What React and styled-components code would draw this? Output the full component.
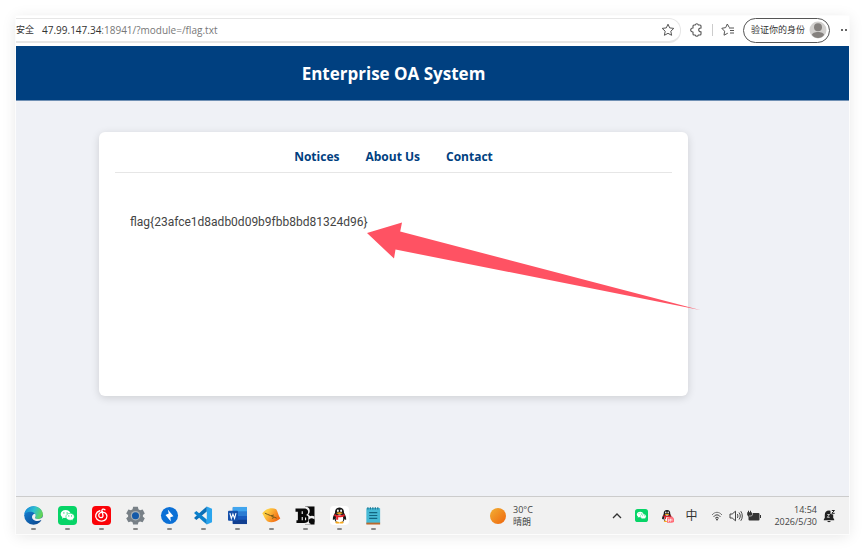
import React from "react";
import styled, { createGlobalStyle, ThemeProvider } from "styled-components";

const theme = {
    main: "#004080",
    page: "#eff1f6",
    taskbar: "#f1f1f1",
    text: "#444444",
    arrow: "#ff5263",
    font: '"Open Sans", "Noto Sans CJK SC", sans-serif',
};

const GlobalStyle = createGlobalStyle`
    * {
        box-sizing: border-box;
    }
    body {
        margin: 0;
        background: #ffffff;
        color: ${theme.text};
        font-family: ${theme.font};
    }
    button,
    input {
        border: 0;
        padding: 0;
        background: none;
        color: inherit;
        font: inherit;
    }
    svg {
        display: block;
        flex: none;
    }
`;

const Desktop = styled.div`
    display: flex;
    min-height: 100vh;
    padding: 16px;
`;

const Screen = styled.div`
    flex: 1;
    min-width: 0;
    display: flex;
    flex-direction: column;
    box-shadow: 0 0 0 1px #fcfcfc, 0 2px 14px rgba(0, 0, 0, 0.1);
`;

/* browser toolbar */

const Toolbar = styled.div`
    display: flex;
    align-items: center;
    height: 30px;
    padding-bottom: 2px;
`;

const AddressBar = styled.div`
    flex: 1;
    min-width: 0;
    display: flex;
    align-items: center;
    height: 25px;
    padding-right: 5px;
    border: 1px solid #e6e6e6;
    border-width: 1px 1px 2px 0;
    border-radius: 0 12px 12px 0;
    font-size: 10px;
    line-height: 16px;
`;

const Security = styled.span`
    margin-right: 8px;
    font-size: 9px;
    color: #333333;
`;

const Host = styled.label`
    color: #333333;
`;

const Address = styled.input`
    flex: 1;
    min-width: 0;
    color: #777777;
    outline: none;
`;

const ToolButton = styled.button`
    display: flex;
    align-items: center;
    justify-content: center;
    width: ${(props) => props.$width || 16}px;
    height: 16px;
    color: #555555;
`;

const Tools = styled.div`
    display: flex;
    align-items: center;
    gap: 7px;
    padding-left: 8px;
`;

const Divider = styled.span`
    width: 1px;
    height: 12px;
    background: #cccccc;
`;

const Profile = styled.button`
    display: flex;
    align-items: center;
    gap: 4px;
    height: 25px;
    padding: 0 2px 0 7px;
    border: 1px solid #555555;
    border-radius: 13px;
    font-size: 9px;
    line-height: 16px;
    color: #333333;
    white-space: nowrap;
`;

/* web page */

const Page = styled.div`
    flex: 1;
    background: ${(props) => props.theme.page};
`;

const Header = styled.header`
    padding: 15px 78px 13px 0;
    background: ${(props) => props.theme.main};
    border-bottom: 1px solid #7090b4;
    color: #ffffff;
    text-align: center;
`;

const Title = styled.h1`
    margin: 0;
    font-size: 17px;
    line-height: 26px;
    font-weight: 700;
`;

const Card = styled.main`
    min-height: 264px;
    margin: 31px 161px 0 83px;
    padding: 17px 16px;
    border-radius: 6px;
    background: #ffffff;
    box-shadow: 0 2px 8px rgba(0, 0, 0, 0.14);
`;

const Nav = styled.nav`
    display: flex;
    justify-content: center;
    gap: 26px;
    padding-bottom: 7px;
    border-bottom: 1px solid #e6e6e6;
`;

const NavLink = styled.a`
    font-size: 12px;
    line-height: 16px;
    font-weight: 700;
    color: ${(props) => props.theme.main};
    text-decoration: none;
`;

const Content = styled.section`
    padding: 41px 15px;
`;

const Flag = styled.p`
    position: relative;
    width: fit-content;
    margin: 0;
    font-family: Roboto, sans-serif;
    font-size: 12px;
    line-height: 16px;
`;

const Arrow = styled.svg`
    position: absolute;
    left: 237px;
    top: 8px;
    fill: ${(props) => props.theme.arrow};
    pointer-events: none;
`;

/* taskbar */

const Taskbar = styled.footer`
    display: flex;
    align-items: center;
    height: 38px;
    border-top: 1px solid #cccccc;
    background: ${(props) => props.theme.taskbar};
    font-size: 9px;
    line-height: 12px;
`;

const AppButton = styled.button`
    display: flex;
    flex-direction: column;
    align-items: center;
    gap: 3px;
    width: 34px;
    padding-top: 4px;

    &::after {
        content: "";
        width: 5px;
        height: 2px;
        border-radius: 1px;
        background: #888888;
    }
`;

const Weather = styled.button`
    display: flex;
    align-items: center;
    gap: 7px;
    margin-left: 100px;
    text-align: left;
`;

const Sun = styled.span`
    width: 16px;
    height: 16px;
    border-radius: 50%;
    background: linear-gradient(135deg, #f3b034, #ee650d);
`;

const Lines = styled.span`
    display: flex;
    flex-direction: column;
`;

const Tray = styled.div`
    display: flex;
    align-items: center;
    margin-left: auto;
    padding-right: 12px;
`;

const TrayButton = styled.button`
    display: flex;
    align-items: center;
    justify-content: center;
    width: ${(props) => props.$width || 25}px;
    height: 24px;
    font-size: 12px;
    color: #333333;
`;

const Clock = styled.button`
    min-width: 46px;
    margin: 0 4px 0 6px;
    text-align: right;
`;

const StarIcon = () => (
    <svg width="14" height="14" viewBox="0 0 14 14" fill="none" stroke="currentColor" strokeLinejoin="round">
        <path d="M7 1.2l1.7 3.7 4.1.5-3 2.8.8 4.1L7 10.3l-3.6 2 .8-4.1-3-2.8 4.1-.5z" />
    </svg>
);

const PuzzleIcon = () => (
    <svg width="13" height="14" viewBox="0 0 13 14" fill="none" stroke="currentColor" strokeWidth="1.1" strokeLinejoin="round">
        <path d="M4 2h1.200c.3-.8.9-1.200 1.600-1.200S8.100 1.200 8.400 2H10c.6 0 1 .4 1 1v2.100c-1.500-.2-2.300.7-2.300 1.800S9.600 8.900 11 8.700V11c0 .6-.4 1-1 1H8.400c-.3.8-.9 1.200-1.600 1.200S5.500 12.800 5.200 12H4c-.6 0-1-.4-1-1V9C1.500 9 .7 8.100.7 7S1.500 5 3 5V3c0-.6.4-1 1-1z" />
    </svg>
);

const FavoritesIcon = () => (
    <svg width="14" height="14" viewBox="0 0 14 14" fill="none" stroke="currentColor" strokeLinejoin="round">
        <path d="M8.300 4.500L6.300 1 4.700 4.600.8 5.300l2.800 2.900-.6 4 3.800-2" />
        <path d="M8 5h5M9 7.500h4M9 10h4" />
    </svg>
);

const Avatar = () => (
    <svg width="18" height="18" viewBox="0 0 18 18">
        <circle cx="9" cy="9" r="8.500" fill="#d2d0ce" />
        <circle cx="9" cy="6.200" r="4" fill="#85817e" />
        <path d="M3 14c0-4 12-4 12 0-2.500 4-9.500 4-12 0z" fill="#85817e" />
    </svg>
);

const DotsIcon = () => (
    <svg width="12" height="4" viewBox="0 0 12 4" fill="#333333">
        <circle cx="5" cy="2" r="1" />
        <circle cx="9" cy="2" r="1" />
    </svg>
);

const EdgeIcon = () => (
    <svg width="19" height="19" viewBox="0 0 20 20">
        <defs>
            <linearGradient id="edgeTop" x1="0" y1="0.300" x2="1" y2="0.600">
                <stop offset="0" stopColor="#1688d8" />
                <stop offset="0.500" stopColor="#2fc0d0" />
                <stop offset="1" stopColor="#68d84a" />
            </linearGradient>
            <linearGradient id="edgeBase" x1="0" y1="0" x2="0.800" y2="1">
                <stop offset="0" stopColor="#1788dc" />
                <stop offset="1" stopColor="#0b478f" />
            </linearGradient>
        </defs>
        <circle cx="10" cy="10" r="9.800" fill="url(#edgeBase)" />
        <path d="M.3 9C1 3.500 5 .2 10 .2c5.600 0 9.800 4 9.800 8.400 0 3.200-2.500 5-5.200 5-2.200 0-3.300-.8-2.900-1.800.8-1 .8-2.600-.2-3.700C9 5.300 2.500 5.300.3 9z" fill="url(#edgeTop)" />
        <path d="M11.500 8.100c1 1.100 1 2.700.2 3.700-.4 1 .7 1.800 2.900 1.800 1.700 0 3.400-.6 4.300-1.600l1.100.2v3l-2-.4c-2.400 1.600-6 1.400-8-.3-2.400-2-2-5.800 1.500-6.400z" fill="#f1f1f1" />
    </svg>
);

const WechatIcon = ({ size = 19, bg = "#07d467" }) => (
    <svg width={size} height={size} viewBox="0 0 20 20">
        <rect width="20" height="20" rx="4" fill={bg} />
        <path d="M8 4.300c-3 0-5.200 1.900-5.200 4.200 0 1.300.7 2.400 1.800 3.200l-.4 1.700 1.900-1c3.900 1.200 7.400-1 7.100-4.200C13 6 10.800 4.300 8 4.300z" fill="#ffffff" />
        <path d="M12.800 7.700c-2.700 0-4.500 1.600-4.500 3.700s2 3.600 4.500 3.600c.6 0 1.100-.1 1.600-.2l1.500.8-.4-1.400c1.100-.7 1.700-1.600 1.700-2.800 0-2.100-1.900-3.700-4.400-3.700z" fill="#ffffff" stroke={bg} strokeWidth=".6" />
        <g fill={bg}>
            <circle cx="6.200" cy="7.300" r=".7" />
            <circle cx="9.600" cy="7.300" r=".7" />
            <circle cx="11.400" cy="10.400" r=".6" />
            <circle cx="14.300" cy="10.400" r=".6" />
        </g>
    </svg>
);

const MusicIcon = () => (
    <svg width="19" height="19" viewBox="0 0 20 20">
        <rect width="20" height="20" rx="4" fill="#fb0308" />
        <path d="M8.300 5C3.800 6.500 2.500 11 5.300 14c2.700 2.900 7.800 2.500 9.800-.8 1.700-3 0-6.500-3.800-6.700-3 0-4.700 2.100-4.100 4.200.6 2 3.600 2.200 4.300.1.400-1.800-1.200-4.700-1.100-6 .1-1.600 1.900-2 3.200-.9" fill="none" stroke="#ffffff" strokeWidth="1.400" strokeLinecap="round" />
    </svg>
);

const SettingsIcon = () => (
    <svg width="19" height="19" viewBox="0 0 20 20">
        <path d="M7.500.8h5l.6 2.700 1.700 1 2.700-.9 2.300 4.200-2 1.700v1.800l2 1.600-2.300 4.200-2.700-.9-1.700 1-.6 2.200h-5l-.6-2.200-1.700-1-2.700.9-2.300-4.200 2-1.600V9.500l-2-1.700 2.300-4.200 2.700.9 1.700-1z" fill="#788087" />
        <circle cx="10" cy="10.200" r="5" fill="#a8b0b5" />
        <circle cx="10" cy="10.200" r="3.700" fill="#1459a8" />
    </svg>
);

const BoltIcon = () => (
    <svg width="19" height="19" viewBox="0 0 20 20">
        <circle cx="10" cy="10" r="9" fill="#0b70d6" />
        <path d="M8.200 3.700L9.200 8l-3.400 1.400 5.600 7-.5-4.600 3.300-1z" fill="#ffffff" />
    </svg>
);

const CodeIcon = () => (
    <svg width="20" height="19" viewBox="0 0 20 20">
        <path d="M14 .5v5.200L3 14.700l-2.500-2L10 4z" fill="#0b6fb7" />
        <path d="M14 19.500v-5.200L3 5.300l-2.500 2L10 16z" fill="#0b80cc" />
        <path d="M14 .4l5.500 2.400v14.400L14 19.600z" fill="#2aa5ee" />
    </svg>
);

const WordIcon = () => (
    <svg width="19" height="19" viewBox="0 0 20 20">
        <rect x="5" y="1" width="15" height="18" rx="1" fill="#185abd" />
        <path d="M5 1h15v5H5z" fill="#41a5ee" />
        <path d="M5 6h15v4.500H5z" fill="#2b7cd3" />
        <path d="M5 14.500h15V19H5z" fill="#103f91" />
        <rect x="0" y="5" width="10.500" height="10.500" rx="1" fill="#1550aa" />
        <path d="M2 7.500l1.500 5.500 1.700-4.500L6.900 13l1.500-5.500" fill="none" stroke="#ffffff" strokeWidth="1.200" />
    </svg>
);

const LeafIcon = () => (
    <svg width="20" height="19" viewBox="0 0 20 20">
        <defs>
            <linearGradient id="leaf" x1="0" y1="0" x2="1" y2="0.500">
                <stop offset="0.300" stopColor="#ffcf43" />
                <stop offset="1" stopColor="#f36b13" />
            </linearGradient>
        </defs>
        <path d="M.8 7.500C4 3 11 .8 15.500 3.500c1.700 2.500 2 6.500 4.300 9.700-4 3.500-10 5-13.800 2.800C3.500 14 2.500 10 .8 7.500z" fill="url(#leaf)" />
        <path d="M3.500 7.500c3 1.500 8.500 3.500 12.500 5.300M10 10.300l3-.8M11 13l2-.8" fill="none" stroke="#6b5518" strokeWidth="1" />
    </svg>
);

const BurpIcon = () => (
    <svg width="20" height="19" viewBox="0 0 20 20">
        <path d="M10 .5h10v19H10z" fill="#0a0a0a" />
        <path d="M10 .5c3 0 5 1.800 5 4.500 0 1.800-.6 3-1.600 4 1.600 1 2.600 2.300 2.600 4.500v6h-6z" fill="#f1f1f1" />
        <path d="M0 2.500h9c3 0 4.300 1.400 4.300 3.500 0 1.800-.8 2.900-2.300 3.400 2 .5 3 2 3 4 0 3-2 4.600-5 4.600H1v-3h1.500v-9H0z" fill="#0a0a0a" />
        <path d="M6.500 5.500h1.200v3H6.500zM6.500 11.500h1.200v3.500H6.500zM10 12h1.200v3H10z" fill="#f1f1f1" />
        <path d="M13.500 12.500c1-2.500 4.500-3 6.500-1.500v2.500l-6 2z" fill="#f1f1f1" />
        <circle cx="17" cy="15.800" r="3" fill="#0a0a0a" />
    </svg>
);

const PenguinIcon = ({ size = 19, badge }) => (
    <svg width={size} height={size} viewBox="0 0 20 20">
        {!badge && <rect width="20" height="20" rx="4" fill="#ffffff" />}
        <path d="M10 1.500c-3.200 0-4.900 2.300-4.700 5.600C4 9.300 2.800 11.500 3 14.500c.7.300 1.500-.7 1.700-.9.500 1.800 1.200 2.900 2 3.500h6.600c.8-.6 1.500-1.700 2-3.500.2.200 1 1.200 1.700.9.200-3-1-5.200-2.300-7.400.2-3.300-1.500-5.600-4.700-5.600z" fill="#171717" />
        <ellipse cx="10" cy="13.300" rx="3.900" ry="4.400" fill="#ffffff" />
        <ellipse cx="8.300" cy="5" rx="1" ry="1.400" fill="#ffffff" />
        <ellipse cx="11.700" cy="5" rx="1" ry="1.400" fill="#ffffff" />
        <path d="M6.500 7.400c2-1 5-1 7 0-1.500 1.600-5.500 1.600-7 0z" fill="#f6a81c" />
        <path d="M4.800 8.500c3 2 7.400 2 10.400 0l.4 2c-2.300 1.300-4.700 1.600-7 1.400v2.600H6.500v-3.100l-2.100-1z" fill="#e5222b" />
        <path d="M5.500 17.200c.8-1.200 3.300-1 4.500.3 1.200-1.300 3.700-1.500 4.500-.3 0 1.400-2.500 1.700-4.500.9-2 .8-4.500.5-4.500-.9z" fill="#f6a81c" />
        {badge && <path d="M10 12.500l7-2 3 3v5l-3 1.300h-7z" fill="#ff6d78" />}
        {badge && <path d="M12 14v4l3-4v4m2-4v3" fill="none" stroke="#ffffff" />}
    </svg>
);

const NotepadIcon = () => (
    <svg width="18" height="19" viewBox="0 0 18 20">
        <rect x="2" y="2" width="14.500" height="17" rx="1" fill="#46b9d5" />
        <path d="M3 2.500h13" stroke="#1d7692" strokeWidth="2.500" strokeDasharray="1.300 1.300" />
        <path d="M5 7h8.500M5 10h8.500M5 13h8.500" stroke="#126580" strokeWidth="1.200" />
        <path d="M2 18.500h14.500" stroke="#b9682d" strokeWidth="2" />
    </svg>
);

const ChevronIcon = () => (
    <svg width="10" height="6" viewBox="0 0 10 6" fill="none" stroke="currentColor" strokeWidth="1.300">
        <path d="M1 5l4-4 4 4" />
    </svg>
);

const WifiIcon = () => (
    <svg width="12" height="10" viewBox="0 0 12 10" fill="none" stroke="#777777">
        <path d="M1 4c3-3.600 7-3.600 10 0" />
        <path d="M2.700 5.700c2-2.400 4.600-2.400 6.600 0M4.200 7.300c1.200-1.400 2.400-1.400 3.600 0" stroke="currentColor" />
        <circle cx="6" cy="8.500" r=".9" fill="currentColor" stroke="none" />
    </svg>
);

const SpeakerIcon = () => (
    <svg width="14" height="12" viewBox="0 0 14 12" fill="none" stroke="currentColor" strokeWidth=".9" strokeLinejoin="round">
        <path d="M1 4h2.200L6.500 1.200v9.600L3.200 8H1z" />
        <path d="M8.300 4c.8 1 .8 3 0 4M10 2.500c1.700 2 1.700 5 0 7M11.800 1.200c2 2.800 2 6.800 0 9.600" />
    </svg>
);

const BatteryIcon = () => (
    <svg width="14" height="12" viewBox="0 0 14 12" fill="currentColor">
        <path d="M1 .8h1v1.500h1V.8h1v1.500h.8V4L4 5v1.500H1.500L.2 5V2.300H1z" />
        <rect x="1.500" y="3" width="11" height="7.500" rx="1" />
        <rect x="13" y="5" width="1" height="3" />
        <path d="M5.500 3v1.500L4.500 6H2" fill="none" stroke="#f1f1f1" strokeWidth=".6" />
    </svg>
);

const BellIcon = () => (
    <svg width="13" height="14" viewBox="0 0 13 14">
        <path d="M6 1.500C3.300 1.500 1.800 3.300 1.800 5.700v3L.8 10.500v.8h10.400v-.8l-1-1.800V5.500L7.500 5V1.700zM4.200 12h3.600c-.5 1.500-3.100 1.500-3.600 0z" fill="#222222" />
        <path d="M4.300 5.500h2.200L4.300 8.300h2.400" fill="none" stroke="#f1f1f1" strokeWidth=".8" />
        <path d="M8.800 1.500h2.700L8.800 4.300h2.900" fill="none" stroke="#222222" />
    </svg>
);

const links = ["Notices", "About Us", "Contact"];

const apps = [
    { name: "Edge", Icon: EdgeIcon },
    { name: "WeChat", Icon: WechatIcon },
    { name: "Music", Icon: MusicIcon },
    { name: "Settings", Icon: SettingsIcon },
    { name: "Thunder", Icon: BoltIcon },
    { name: "VS Code", Icon: CodeIcon },
    { name: "Word", Icon: WordIcon },
    { name: "Leaf", Icon: LeafIcon },
    { name: "Burp", Icon: BurpIcon },
    { name: "QQ", Icon: PenguinIcon },
    { name: "Notepad", Icon: NotepadIcon },
];

const BrowserToolbar = () => (
    <Toolbar>
        <AddressBar>
            <Security>安全</Security>
            <Host htmlFor="address">47.99.147.34</Host>
            <Address id="address" defaultValue=":18941/?module=/flag.txt" />
            <ToolButton aria-label="Add to favorites" $width={14}>
                <StarIcon />
            </ToolButton>
        </AddressBar>
        <Tools>
            <ToolButton aria-label="Extensions">
                <PuzzleIcon />
            </ToolButton>
            <Divider />
            <ToolButton aria-label="Favorites">
                <FavoritesIcon />
            </ToolButton>
            <Profile>
                验证你的身份
                <Avatar />
            </Profile>
            <ToolButton aria-label="More" $width={12}>
                <DotsIcon />
            </ToolButton>
        </Tools>
    </Toolbar>
);

const OaPage = () => (
    <Page>
        <Header>
            <Title>Enterprise OA System</Title>
        </Header>
        <Card>
            <Nav>
                {links.map((link) => (
                    <NavLink key={link} href="#">
                        {link}
                    </NavLink>
                ))}
            </Nav>
            <Content>
                <Flag>
                    {"flag{23afce1d8adb0d09b9fbb8bd81324d96}"}
                    <Arrow width="334" height="90" viewBox="0 0 334 90" aria-hidden="true">
                        <path d="M0 11L35 .5l-1.800 9L333 88 28.500 27.500l-1.500 9z" />
                    </Arrow>
                </Flag>
            </Content>
        </Card>
    </Page>
);

const SystemTaskbar = () => (
    <Taskbar>
        {apps.map(({ name, Icon }) => (
            <AppButton key={name} aria-label={name}>
                <Icon />
            </AppButton>
        ))}
        <Weather>
            <Sun />
            <Lines>
                <span>30°C</span>
                <span>晴朗</span>
            </Lines>
        </Weather>
        <Tray>
            <TrayButton aria-label="Show hidden icons">
                <ChevronIcon />
            </TrayButton>
            <TrayButton aria-label="WeChat">
                <WechatIcon size={13} />
            </TrayButton>
            <TrayButton aria-label="QQ">
                <PenguinIcon size={14} badge />
            </TrayButton>
            <TrayButton>中</TrayButton>
            <TrayButton aria-label="Network">
                <WifiIcon />
            </TrayButton>
            <TrayButton aria-label="Volume" $width={14}>
                <SpeakerIcon />
            </TrayButton>
            <TrayButton aria-label="Battery" $width={22}>
                <BatteryIcon />
            </TrayButton>
            <Clock>
                14:54
                <br />
                2026/5/30
            </Clock>
            <TrayButton aria-label="Notifications" $width={16}>
                <BellIcon />
            </TrayButton>
        </Tray>
    </Taskbar>
);

const App = () => (
    <ThemeProvider theme={theme}>
        <GlobalStyle />
        <Desktop>
            <Screen>
                <BrowserToolbar />
                <OaPage />
                <SystemTaskbar />
            </Screen>
        </Desktop>
    </ThemeProvider>
);

export default App;
